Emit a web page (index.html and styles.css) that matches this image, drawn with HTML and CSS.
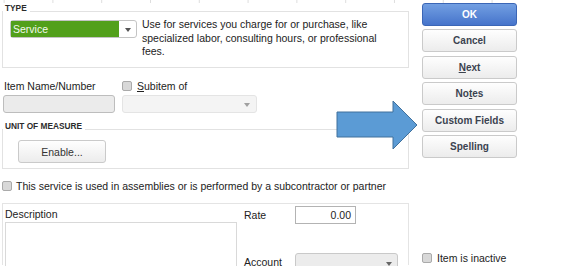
FILE: index.html
```html
<!DOCTYPE html>
<html lang="en">
<head>
    <meta charset="UTF-8">
    <title>New Item</title>
    <link rel="stylesheet" href="styles.css">
</head>
<body>
    <div class="ruler"></div>
    <div class="window">
        <div class="form">
            <fieldset class="group type-group">
                <legend>TYPE</legend>
                <div class="type-row">
                    <div class="select type-select">
                        <span class="select-value">Service</span>
                        <span class="select-arrow"></span>
                    </div>
                    <p class="type-help">Use for services you charge for or purchase, like specialized labor, consulting hours, or professional fees.</p>
                </div>
            </fieldset>

            <div class="name-row">
                <div class="field">
                    <div class="field-label">Item Name/Number</div>
                    <div class="text-input name-input"></div>
                </div>
                <div class="field">
                    <div class="check-label"><span class="checkbox"></span><span><u>S</u>ubitem of</span></div>
                    <div class="select sub-select"><span class="select-arrow"></span></div>
                </div>
            </div>

            <fieldset class="group uom-group">
                <legend>UNIT OF MEASURE</legend>
                <button class="btn enable-btn">Enable...</button>
            </fieldset>

            <div class="check-label assembly"><span class="checkbox"></span><span>This service is used in assemblies or is performed by a subcontractor or partner</span></div>

            <div class="sales-box">
                <div class="desc-col">
                    <div class="field-label">Description</div>
                    <div class="textarea"></div>
                </div>
                <div class="price-col">
                    <div class="price-row">
                        <span class="price-label">Rate</span>
                        <div class="text-input rate-input">0.00</div>
                    </div>
                    <div class="price-row account-row">
                        <span class="price-label">Account</span>
                        <div class="select account-select"><span class="select-arrow"></span></div>
                    </div>
                </div>
            </div>
        </div>

        <div class="actions">
            <button class="btn btn-primary">OK</button>
            <button class="btn">Cancel</button>
            <button class="btn"><u>N</u>ext</button>
            <button class="btn">No<u>t</u>es</button>
            <button class="btn">Custom Fields</button>
            <button class="btn">Spellin<u>g</u></button>
            <div class="check-label inactive"><span class="checkbox"></span><span>Item is inactive</span></div>
        </div>

        <!-- callout arrow pointing at Custom Fields -->
        <svg class="callout-arrow" width="84" height="51" viewBox="0 0 84 51">
            <polygon points="1,12 57,12 57,1 81,25 57,49 57,37 1,37" fill="#5b9bd5" stroke="#41719c" stroke-width="1"/>
        </svg>
    </div>
</body>
</html>
```

FILE: styles.css
```css
body {
    margin: 0;
    height: 266px;
    overflow: hidden;
    background-color: white;
    font-family: "Liberation Sans", Arial, sans-serif;
    font-size: 10.5px;
    color: #222;
}
.ruler {
    width: 500px;
    height: 3px;
    background-image: linear-gradient(to right, transparent 48px, #dedede 48px);
    background-size: 48.8px 100%;
    background-position: 4.6px 0;
}
.window {
    position: relative;
    display: flex;
    gap: 13px;
    padding-left: 2px;
}
.form {
    width: 407px;
}
.group {
    margin: 0;
    padding: 0;
    border: 1px solid #e2e2e2;
    min-width: 0;
}
.group legend {
    padding: 0 3px 5px 2px;
    font-size: 8.3px;
    line-height: 9px;
    font-weight: bold;
    color: #2b2b2b;
}
.type-group {
    margin-top: 1px;
}
.type-row {
    display: flex;
    gap: 5px;
    padding: 0 8px 8px 7px;
}
.select {
    position: relative;
    box-sizing: border-box;
    border: 1px solid #c9c9c9;
    border-radius: 3px;
    background-color: #f2f2f2;
}
.select-arrow {
    position: absolute;
    right: 6px;
    top: 7px;
    border-left: 3.5px solid transparent;
    border-right: 3.5px solid transparent;
    border-top: 4px solid #a0a0a0;
}
.type-select {
    flex: none;
    display: flex;
    width: 127px;
    height: 18px;
    margin-top: 2px;
    padding-right: 17px;
    background-color: white;
    border-color: #c4c4c4;
}
.type-select .select-value {
    flex: 1;
    background-color: #52a01b;
    color: #f4f8ee;
    line-height: 16px;
    padding-left: 2px;
}
.type-select .select-arrow {
    right: 5px;
    border-top-color: #555;
}
.type-help {
    margin: 0;
    width: 248px;
    line-height: 13.5px;
}
.name-row {
    display: grid;
    grid-template-columns: 112px 135px;
    column-gap: 7px;
    margin-top: 12px;
    padding-left: 1px;
}
.field-label {
    line-height: 13px;
    padding-left: 1px;
}
.text-input {
    box-sizing: border-box;
    height: 18px;
    border: 1px solid #bdbdbd;
    border-radius: 3px;
}
.name-input {
    margin-top: 2.5px;
    background-color: #ebebeb;
}
.check-label {
    display: flex;
    align-items: center;
    gap: 5px;
    line-height: 13px;
}
.checkbox {
    flex: none;
    box-sizing: border-box;
    width: 10px;
    height: 10px;
    border: 1px solid #aaa;
    border-radius: 2px;
    background-color: #d8d8d8;
}
.sub-select {
    height: 18px;
    margin-top: 2px;
    border-color: #e4e4e4;
    background-color: #f4f4f4;
}
.uom-group {
    margin-top: 9px;
    padding-bottom: 5px;
}
.btn {
    box-sizing: border-box;
    height: 23px;
    padding: 0;
    border: 1px solid #cacaca;
    border-radius: 3px;
    background: linear-gradient(#fefefe, #ececec);
    font-family: "Liberation Sans", Arial, sans-serif;
    font-size: 10px;
    font-weight: bold;
    color: #3b4350;
    cursor: pointer;
}
.enable-btn {
    display: block;
    width: 88px;
    margin: 4px 0 0 15px;
    font-size: 10.5px;
    font-weight: normal;
    color: #333;
}
.assembly {
    margin-top: 10.5px;
    gap: 4px;
}
.sales-box {
    display: flex;
    gap: 7px;
    box-sizing: border-box;
    height: 62px;
    margin-top: 10.5px;
    padding: 4.4px 0 0 2px;
    border: 1px solid #e4e4e4;
    border-bottom: none;
}
.desc-col {
    width: 232px;
}
.desc-col .field-label {
    padding-left: 0;
}
.textarea {
    height: 44px;
    margin-top: 1px;
    border: 1px solid #d9d9d9;
    border-bottom: none;
}
.price-col {
    margin-top: -2.4px;
}
.price-row {
    display: flex;
    align-items: center;
    height: 18px;
}
.price-label {
    width: 51px;
}
.rate-input {
    width: 61px;
    padding-right: 4px;
    border-radius: 0;
    border-color: #b3b3b3;
    text-align: right;
    line-height: 16px;
}
.account-row {
    margin-top: 29px;
}
.account-select {
    width: 103px;
    height: 18px;
    background-color: #ececec;
}
.account-select .select-arrow {
    right: 5px;
    top: 8px;
    border-top-color: #666;
}
.actions {
    display: flex;
    flex-direction: column;
    gap: 3.4px;
    width: 95px;
}
.btn-primary {
    border-color: #3b66b6;
    background: linear-gradient(#729fe2, #4674cb);
    color: white;
}
.inactive {
    margin-top: 90.5px;
    width: 150px;
}
.callout-arrow {
    position: absolute;
    left: 336px;
    top: 97px;
}
```
